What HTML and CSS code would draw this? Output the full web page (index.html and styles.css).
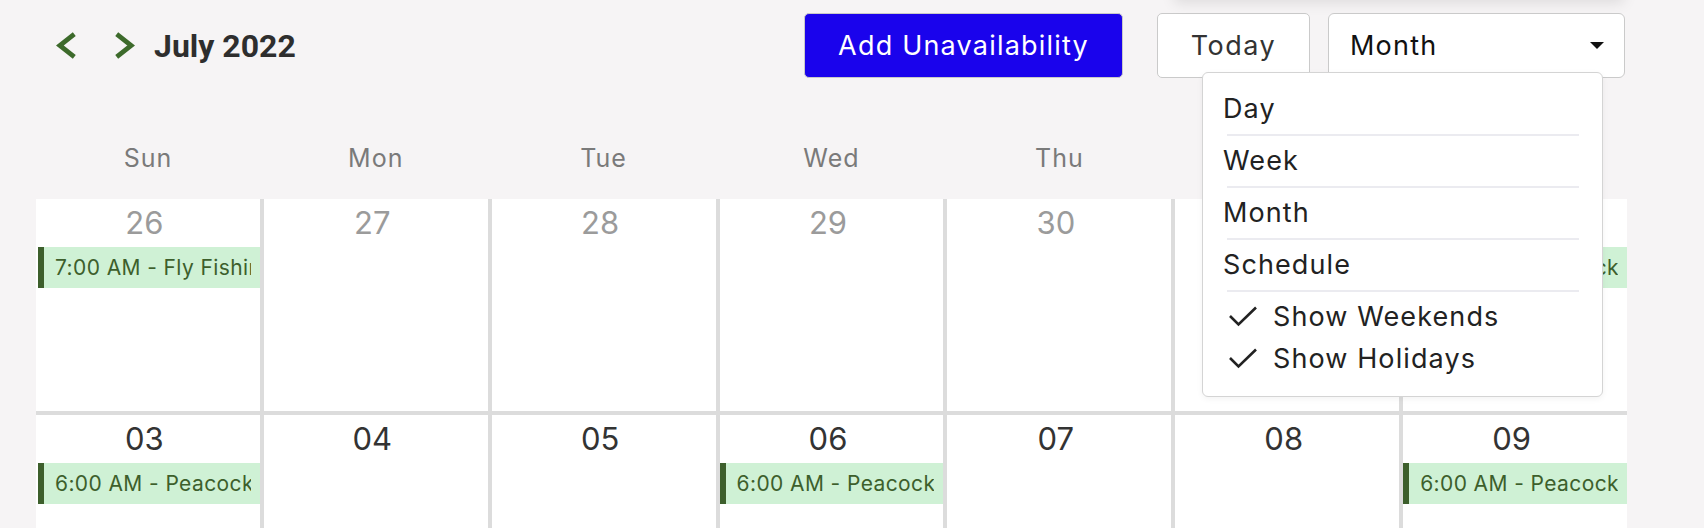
FILE: index.html
```html
<!DOCTYPE html>
<html lang="en">
<head>
<meta charset="utf-8">
<title>Calendar</title>
<link rel="stylesheet" href="styles.css">
</head>
<body>
<div class="page">
  <div class="top-glow"></div>
  <header class="toolbar">
    <div class="nav">
      <svg class="chev" viewBox="0 0 20 26"><polyline points="17.5,2 3.5,13 17.5,24"/></svg>
      <svg class="chev chev-next" viewBox="0 0 20 26"><polyline points="2.5,2 16.5,13 2.5,24"/></svg>
      <span class="title">July 2022</span>
    </div>
    <div class="actions">
      <button class="btn btn-primary">Add Unavailability</button>
      <button class="btn btn-today">Today</button>
      <div class="select">
        <span class="select-label">Month</span>
        <span class="caret"></span>
        <div class="menu">
          <div class="menu-item">Day</div>
          <div class="menu-sep"></div>
          <div class="menu-item">Week</div>
          <div class="menu-sep"></div>
          <div class="menu-item">Month</div>
          <div class="menu-sep"></div>
          <div class="menu-item">Schedule</div>
          <div class="menu-sep"></div>
          <div class="menu-check first">
            <svg class="check" viewBox="0 0 30 22"><polyline points="2,11 10.5,19.5 28,2.5"/></svg>
            <span>Show Weekends</span>
          </div>
          <div class="menu-check">
            <svg class="check" viewBox="0 0 30 22"><polyline points="2,11 10.5,19.5 28,2.5"/></svg>
            <span>Show Holidays</span>
          </div>
        </div>
      </div>
    </div>
  </header>

  <div class="weekdays">
    <div class="wd">Sun</div>
    <div class="wd">Mon</div>
    <div class="wd">Tue</div>
    <div class="wd">Wed</div>
    <div class="wd">Thu</div>
    <div class="wd">Fri</div>
    <div class="wd">Sat</div>
  </div>

  <div class="month">
    <div class="cell first-col"><div class="num muted">26</div><div class="event"><span>7:00 AM - Fly Fishing</span></div></div>
    <div class="cell"><div class="num muted">27</div></div>
    <div class="cell"><div class="num muted">28</div></div>
    <div class="cell"><div class="num muted">29</div></div>
    <div class="cell"><div class="num muted">30</div></div>
    <div class="cell"><div class="num">01</div></div>
    <div class="cell"><div class="num">02</div><div class="event"><span>6:00 AM - Peacock Bass</span></div></div>

    <div class="cell first-col"><div class="num">03</div><div class="event"><span>6:00 AM - Peacock Bass</span></div></div>
    <div class="cell"><div class="num">04</div></div>
    <div class="cell"><div class="num">05</div></div>
    <div class="cell"><div class="num">06</div><div class="event"><span>6:00 AM - Peacock Bass</span></div></div>
    <div class="cell"><div class="num">07</div></div>
    <div class="cell"><div class="num">08</div></div>
    <div class="cell"><div class="num">09</div><div class="event"><span>6:00 AM - Peacock Bass</span></div></div>
  </div>
</div>
</body>
</html>
```

FILE: styles.css
```css
html, body {
  margin: 0;
  height: 100%;
  overflow: hidden;
}

body {
  background: #f6f4f5;
  font-family: "Inter", "Noto Sans", sans-serif;
  color: #222;
}

.page {
  position: relative;
  padding: 13px 77px 0 36px;
}

.top-glow {
  position: absolute;
  top: -30px;
  left: 1174px;
  width: 450px;
  height: 30px;
  background: #f6f4f5;
  box-shadow: 0 3px 14px rgba(0, 0, 0, 0.10);
}

/* ---------- toolbar ---------- */
.toolbar {
  display: flex;
  align-items: center;
  height: 65px;
}

.nav {
  display: flex;
  align-items: center;
  margin-left: 20px;
}

.chev {
  display: block;
  width: 21px;
  height: 27px;
}

.chev polyline {
  fill: none;
  stroke: #3d6a2b;
  stroke-width: 4.6;
}

.chev-next {
  margin-left: 37px;
}

.title {
  margin-left: 19px;
  font-family: "Roboto", sans-serif;
  font-weight: 700;
  font-size: 32px;
  color: #2e2e2e;
}

.actions {
  margin-left: auto;
  margin-right: 2px;
  display: flex;
  align-items: center;
}

.btn {
  box-sizing: border-box;
  height: 65px;
  font-family: inherit;
  font-size: 27px;
  letter-spacing: 1.2px;
  border-radius: 5px;
  padding: 0;
}

.btn-primary {
  width: 319px;
  background: #1a03ec;
  border: 1px solid #c9c9c9;
  color: #fff;
}

.btn-today {
  width: 153px;
  margin-left: 34px;
  background: #fff;
  border: 1.5px solid #cacaca;
  color: #333;
  letter-spacing: 1.5px;
}

.select {
  position: relative;
  box-sizing: border-box;
  width: 297px;
  height: 65px;
  margin-left: 18px;
  background: #fff;
  border: 1.5px solid #cacaca;
  border-radius: 6px;
  display: flex;
  align-items: center;
  justify-content: space-between;
  padding: 0 20px 0 21px;
}

.select-label {
  font-size: 27px;
  letter-spacing: 1.2px;
  color: #111;
}

.caret {
  width: 0;
  height: 0;
  border-left: 7px solid transparent;
  border-right: 7px solid transparent;
  border-top: 7px solid #111;
}

/* ---------- dropdown ---------- */
.menu {
  position: absolute;
  top: 58px;
  right: 21px;
  z-index: 10;
  box-sizing: border-box;
  width: 401px;
  padding: 11px 0 17px;
  background: #fff;
  border: 1px solid #d4d4d4;
  border-radius: 6px;
  box-shadow: 0 2px 6px rgba(0, 0, 0, 0.05);
}

.menu-item {
  height: 50px;
  line-height: 50px;
  padding-left: 20px;
  font-size: 27px;
  letter-spacing: 1.1px;
  color: #222;
}

.menu-sep {
  height: 2px;
  margin: 0 23px 0 24px;
  background: #ebebf0;
}

.menu-check {
  display: flex;
  align-items: center;
  height: 42px;
  padding-left: 25px;
  font-size: 27px;
  letter-spacing: 1.1px;
  color: #222;
}

.menu-check.first {
  margin-top: 3px;
}

.check {
  width: 30px;
  height: 22px;
  margin-right: 15px;
  flex: none;
}

.check polyline {
  fill: none;
  stroke: #222;
  stroke-width: 2.6;
}

/* ---------- weekday header ---------- */
.weekdays {
  display: grid;
  grid-template-columns: repeat(7, 1fr);
  gap: 4px;
  height: 121px;
  box-sizing: border-box;
  padding-top: 40px;
}

.wd {
  text-align: center;
  line-height: 81px;
  height: 81px;
  font-size: 25px;
  letter-spacing: 1px;
  color: #7a7a7a;
}

/* ---------- month grid ---------- */
.month {
  display: grid;
  grid-template-columns: repeat(7, 1fr);
  grid-auto-rows: 212px;
  gap: 4px;
  background: #dcdcdc;
}

.cell {
  background: #fff;
  padding-top: 4px;
  min-width: 0;
}

.num {
  text-align: center;
  padding-right: 7px;
  font-size: 31px;
  line-height: 40px;
  color: #333;
}

.num.muted {
  color: #9b9b9b;
}

.event {
  height: 41px;
  margin: 4px 0 0 0;
  background: #cff1d5;
  border-left: 6px solid #3d5f2c;
  padding: 0 9px 0 11px;
}

.first-col .event {
  margin-left: 2px;
}

.event span {
  display: block;
  overflow: hidden;
  white-space: nowrap;
  line-height: 41px;
  font-size: 21px;
  letter-spacing: 0.4px;
  color: #3d5f2c;
}
```
